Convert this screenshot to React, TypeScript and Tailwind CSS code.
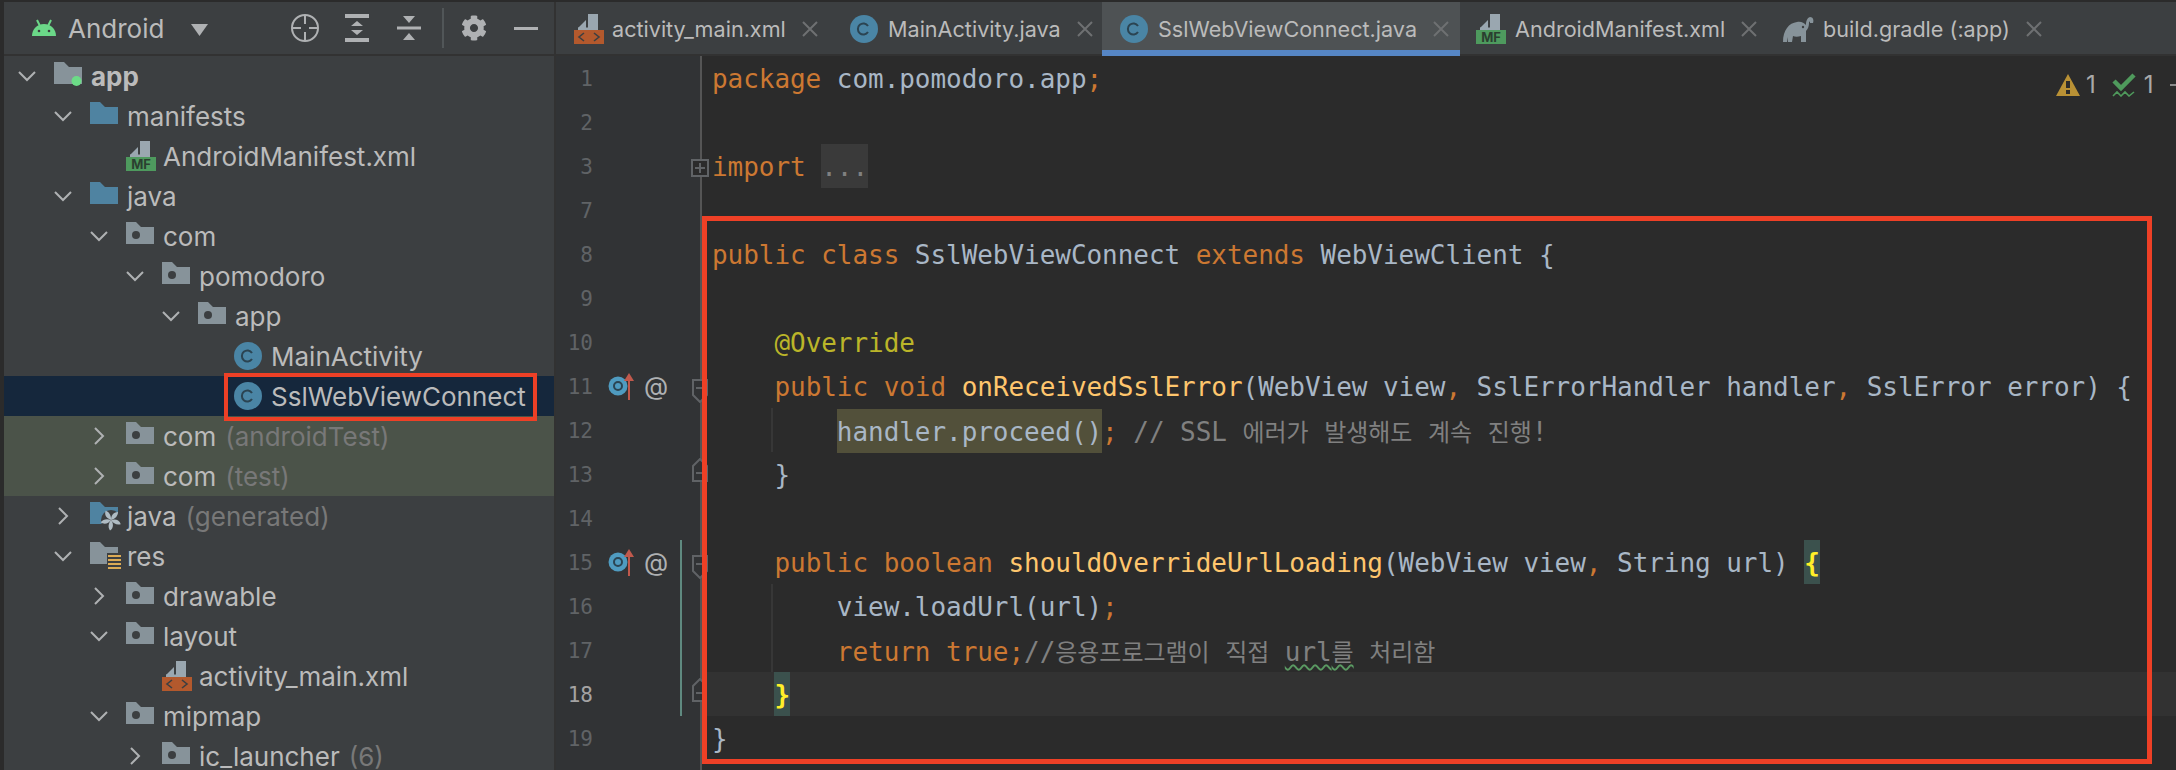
import type { ReactNode } from 'react';
import { FaCog } from 'react-icons/fa';

/* ---------- small icons ---------- */

const FOLDER = 'M0 0H10L15 5H28V22H0Z';

function Chevron({ dir }: { dir: 'down' | 'right' }) {
  return (
    <svg width="18" height="18" viewBox="0 0 18 18" fill="none" stroke="#afb1b3" strokeWidth="2">
      {dir === 'down' ? <path d="M1 5L9 13L17 5" /> : <path d="M5 1L13 9L5 17" />}
    </svg>
  );
}

function Folder({ kind }: { kind: 'source' | 'package' | 'module' | 'generated' | 'res' }) {
  const fill = kind === 'source' || kind === 'generated' ? '#4f83a1' : '#87939a';
  return (
    <svg width="32" height="28" viewBox="0 0 32 28" className="overflow-visible">
      <path d={FOLDER} fill={fill} />
      {kind === 'package' && <circle cx="10" cy="13" r="4" fill="#3c3f41" />}
      {kind === 'module' && <circle cx="22.5" cy="19" r="5" fill="#6cdc87" />}
      {kind === 'generated' && (
        <g>
          <circle cx="21" cy="18" r="10" fill="#3c3f41" />
          <g fill="#afbcc4">
            {[0, 72, 144, 216, 288].map((deg) => (
              <path key={deg} d="M0 0C0 -4 2 -8 7 -8C7 -4 4 -1 0 0Z" transform={`translate(21 18) rotate(${deg})`} />
            ))}
          </g>
        </g>
      )}
      {kind === 'res' && (
        <g>
          <rect x="17" y="11" width="17" height="17" fill="#3c3f41" />
          <g fill="#dcab55">
            <rect x="18" y="13" width="13" height="2" />
            <rect x="18" y="17" width="13" height="2" />
            <rect x="18" y="21" width="13" height="2" />
            <rect x="18" y="25" width="13" height="2" />
          </g>
        </g>
      )}
    </svg>
  );
}

function ClassIcon() {
  return (
    <svg width="28" height="28" viewBox="0 0 28 28">
      <circle cx="14" cy="14" r="14" fill="#4a85a5" />
      <path d="M18 11a5.5 5.5 0 1 0 0 6" fill="none" stroke="#2b4452" strokeWidth="2" />
    </svg>
  );
}

function FileIcon({ badge }: { badge: 'mf' | 'xml' }) {
  return (
    <svg width="30" height="30" viewBox="0 0 30 30">
      <path d="M4 14L12 6V14ZM14 0H24V15H4V16H24V15H14Z" fill="#9aa7b0" />
      <path d="M14 0H24V15H4V13.5H14Z" fill="#9aa7b0" />
      {badge === 'mf' ? (
        <g>
          <rect y="16" width="30" height="14" fill="#4e9a5e" />
          <text x="15" y="28" textAnchor="middle" fontSize="13" fontWeight="700" fill="#2b3f30" fontFamily="Inter, sans-serif">
            MF
          </text>
        </g>
      ) : (
        <g>
          <rect y="16" width="30" height="14" fill="#b3592d" />
          <path d="M10 19L5 23L10 27M20 19L25 23L20 27" fill="none" stroke="#3c3f41" strokeWidth="1.6" />
        </g>
      )}
    </svg>
  );
}

function GradleIcon() {
  return (
    <svg width="32" height="28" viewBox="0 0 32 28">
      <path
        d="M1 27C1 15 7 8 15 7C19 6 22 8 24 10C24 6 25 3 28 2C31 2 32 5 31 8L28 8C28 6 27 6 27 8C27 11 26 14 24 16L24 27H19L19 21C16 22 13 22 11 21L10 27H6L6 22L5 27Z"
        fill="#87939a"
      />
      <circle cx="21" cy="12" r="1.2" fill="#3c3f41" />
    </svg>
  );
}

function CloseX() {
  return (
    <svg width="16" height="16" viewBox="0 0 16 16" stroke="#6e7072" strokeWidth="2" className="ml-4 shrink-0">
      <path d="M1 1L15 15M15 1L1 15" />
    </svg>
  );
}

function FoldMarker({ type }: { type: 'open' | 'close' | 'plus' }) {
  if (type === 'plus') {
    return (
      <svg width="18" height="18" viewBox="0 0 18 18" fill="#2b2b2b" stroke="#606366" strokeWidth="2" className="absolute left-[135px] top-[15px]">
        <rect x="1" y="1" width="16" height="16" />
        <path d="M4 9H14M9 4V14" />
      </svg>
    );
  }
  const open = type === 'open';
  return (
    <svg
      width="16"
      height="24"
      viewBox="0 0 16 24"
      fill="#313335"
      stroke="#606366"
      strokeWidth="2"
      className={open ? 'absolute left-[136px] top-[15px]' : 'absolute left-[136px] top-[6px]'}
    >
      {open ? <path d="M1 1H15V16L8 23L1 16Z" /> : <path d="M1 23H15V8L8 1L1 8Z" />}
      <path d={open ? 'M4 9H12' : 'M4 15H12'} />
    </svg>
  );
}

function OverrideMark() {
  return (
    <div className="absolute left-[52px] top-0 flex h-[44px] items-center">
      <svg width="30" height="28" viewBox="0 0 30 28">
        <circle cx="10" cy="14" r="9.5" fill="#4f9bc0" />
        <circle cx="10" cy="14" r="4" fill="none" stroke="#2b4452" strokeWidth="2" />
        <path d="M21 28V7" stroke="#c0594c" strokeWidth="2" />
        <path d="M16 9L21 1L26 9Z" fill="#c0594c" />
      </svg>
      <span className="ml-[6px] font-['Inter',sans-serif] text-[25px] leading-none text-[#afb1b3]">@</span>
    </div>
  );
}

/* ---------- project tree ---------- */

interface TreeRow {
  depth: number;
  chevron?: 'down' | 'right';
  icon: ReactNode;
  label: string;
  note?: string;
  bold?: boolean;
  bg?: string;
}

const GREEN_ROW = 'bg-[#4b5349]';

const TREE: TreeRow[] = [
  { depth: 0, chevron: 'down', icon: <Folder kind="module" />, label: 'app', bold: true },
  { depth: 1, chevron: 'down', icon: <Folder kind="source" />, label: 'manifests' },
  { depth: 2, icon: <FileIcon badge="mf" />, label: 'AndroidManifest.xml' },
  { depth: 1, chevron: 'down', icon: <Folder kind="source" />, label: 'java' },
  { depth: 2, chevron: 'down', icon: <Folder kind="package" />, label: 'com' },
  { depth: 3, chevron: 'down', icon: <Folder kind="package" />, label: 'pomodoro' },
  { depth: 4, chevron: 'down', icon: <Folder kind="package" />, label: 'app' },
  { depth: 5, icon: <ClassIcon />, label: 'MainActivity' },
  { depth: 5, icon: <ClassIcon />, label: 'SslWebViewConnect', bg: 'bg-[#15273c]' },
  { depth: 2, chevron: 'right', icon: <Folder kind="package" />, label: 'com', note: '(androidTest)', bg: GREEN_ROW },
  { depth: 2, chevron: 'right', icon: <Folder kind="package" />, label: 'com', note: '(test)', bg: GREEN_ROW },
  { depth: 1, chevron: 'right', icon: <Folder kind="generated" />, label: 'java', note: '(generated)' },
  { depth: 1, chevron: 'down', icon: <Folder kind="res" />, label: 'res' },
  { depth: 2, chevron: 'right', icon: <Folder kind="package" />, label: 'drawable' },
  { depth: 2, chevron: 'down', icon: <Folder kind="package" />, label: 'layout' },
  { depth: 3, icon: <FileIcon badge="xml" />, label: 'activity_main.xml' },
  { depth: 2, chevron: 'down', icon: <Folder kind="package" />, label: 'mipmap' },
  { depth: 3, chevron: 'right', icon: <Folder kind="package" />, label: 'ic_launcher', note: '(6)' },
];

function Sidebar() {
  return (
    <div className="relative w-[550px] shrink-0 bg-[#3c3f41]">
      <div className="flex h-[54px] items-center border-b-2 border-[#323232] text-[26px] text-[#bbbbbb]">
        <svg width="24" height="18" viewBox="0 0 24 18" className="ml-[28px]">
          <path d="M0 17C0 10 5 5 12 5C19 5 24 10 24 17Z" fill="#6bd888" />
          <path d="M5 1L8 7M19 1L16 7" stroke="#6bd888" strokeWidth="2" />
          <circle cx="7" cy="12" r="1.3" fill="#3c3f41" />
          <circle cx="17" cy="12" r="1.3" fill="#3c3f41" />
        </svg>
        <span className="ml-3 w-[96px]">Android</span>
        <svg width="17" height="12" viewBox="0 0 17 12" className="ml-[27px] mt-1" fill="#afb1b3">
          <path d="M0 0H17L8.5 12Z" />
        </svg>
        <svg width="28" height="28" viewBox="0 0 28 28" fill="none" stroke="#afb1b3" strokeWidth="2" className="ml-[83px]">
          <circle cx="14" cy="14" r="13" />
          <path d="M14 1V10M14 18V27M1 14H10M18 14H27" />
        </svg>
        <svg width="24" height="28" viewBox="0 0 24 28" fill="#afb1b3" className="ml-[26px]">
          <rect width="24" height="4" />
          <rect y="24" width="24" height="4" />
          <path d="M6 12L12 7L18 12ZM6 16L12 21L18 16Z" />
        </svg>
        <svg width="24" height="28" viewBox="0 0 24 28" fill="#afb1b3" className="ml-[28px]">
          <rect y="12.5" width="24" height="3" />
          <path d="M6 2H18L12 9ZM6 26H18L12 19Z" />
        </svg>
        <div className="ml-[21px] h-[40px] w-[2px] bg-[#515658]" />
        <FaCog className="ml-[17px] text-[26px] text-[#afb1b3]" />
        <div className="ml-[27px] h-[3px] w-[24px] bg-[#afb1b3]" />
      </div>

      {TREE.map((row, i) => (
        <div key={i} className={`flex h-[40px] items-center text-[26px] text-[#bbbbbb] ${row.bg ?? ''}`}>
          <div style={{ width: 14 + row.depth * 36 }} className="shrink-0" />
          <div className="flex w-[36px] shrink-0 items-center">{row.chevron && <Chevron dir={row.chevron} />}</div>
          <div className="flex w-[37px] shrink-0 items-center">{row.icon}</div>
          <span className={row.bold ? 'font-bold' : ''}>{row.label}</span>
          {row.note && <span className="ml-[9px] text-[#787878]">{row.note}</span>}
        </div>
      ))}

      {/* annotation round the selected class */}
      <div className="absolute left-[220px] top-[371px] h-[48px] w-[313px] border-[4px] border-[#ee4026]" />
    </div>
  );
}

/* ---------- tabs ---------- */

const TABS = [
  { w: 'w-[276px]', pad: 'pl-[18px]', slot: 'w-[38px]', icon: <FileIcon badge="xml" />, label: 'activity_main.xml' },
  { w: 'w-[270px]', pad: 'pl-[18px]', slot: 'w-[38px]', icon: <ClassIcon />, label: 'MainActivity.java' },
  { w: 'w-[358px]', pad: 'pl-[18px]', slot: 'w-[38px]', icon: <ClassIcon />, label: 'SslWebViewConnect.java', active: true },
  { w: 'w-[304px]', pad: 'pl-[16px]', slot: 'w-[39px]', icon: <FileIcon badge="mf" />, label: 'AndroidManifest.xml' },
  { w: 'w-[300px]', pad: 'pl-[18px]', slot: 'w-[41px]', icon: <GradleIcon />, label: 'build.gradle (:app)' },
];

function TabBar() {
  return (
    <div className="flex h-[54px] shrink-0 border-b-2 border-[#323232] bg-[#3c3f41] text-[21.6px] text-[#bbbbbb]">
      {TABS.map((t) => (
        <div
          key={t.label}
          className={`flex h-[54px] shrink-0 items-center whitespace-nowrap ${t.w} ${t.pad} ${
            t.active ? 'border-b-[6px] border-[#5686c5] bg-[#4e5254] pt-[6px]' : ''
          }`}
        >
          <div className={`flex shrink-0 items-center ${t.slot}`}>{t.icon}</div>
          <span>{t.label}</span>
          <CloseX />
        </div>
      ))}
    </div>
  );
}

/* ---------- code ---------- */

const Kw = ({ children }: { children: ReactNode }) => <span className="text-[#cc7832]">{children}</span>;
const Fn = ({ children }: { children: ReactNode }) => <span className="text-[#ffc66d]">{children}</span>;
const Cm = ({ children }: { children: ReactNode }) => <span className="text-[#808080]">{children}</span>;
const Ko = ({ children }: { children: ReactNode }) => (
  <span className="font-['Noto_Sans_CJK_KR',sans-serif] text-[24px] text-[#808080]">{children}</span>
);

// text sits 1px below the row centre, the coloured box has to stay on the row
const Hl = ({ bg, children }: { bg: string; children: ReactNode }) => (
  <span className={`relative -top-px inline-block h-[44px] ${bg}`}>
    <span className="relative top-px">{children}</span>
  </span>
);
const Brace = ({ children }: { children: ReactNode }) => (
  <Hl bg="bg-[#3b514d]">
    <span className="font-bold text-[#ffef28]">{children}</span>
  </Hl>
);

interface Line {
  no: number;
  code?: ReactNode;
  fold?: 'open' | 'close' | 'plus';
  mark?: boolean;
  changed?: boolean;
  guide?: boolean;
  current?: boolean;
}

const LINES: Line[] = [
  { no: 1, code: <><Kw>package</Kw> com.pomodoro.app<Kw>;</Kw></> },
  { no: 2 },
  {
    no: 3,
    fold: 'plus',
    code: <><Kw>import</Kw> <Hl bg="bg-[#3a3a3a]"><span className="text-[#808080]">...</span></Hl></>,
  },
  { no: 7 },
  { no: 8, code: <><Kw>public class</Kw> SslWebViewConnect <Kw>extends</Kw> WebViewClient {'{'}</> },
  { no: 9 },
  { no: 10, code: <>{'    '}<span className="text-[#bbb529]">@Override</span></> },
  {
    no: 11,
    mark: true,
    fold: 'open',
    code: (
      <>
        {'    '}<Kw>public void</Kw> <Fn>onReceivedSslError</Fn>(WebView view<Kw>,</Kw> SslErrorHandler handler<Kw>,</Kw> SslError error) {'{'}
      </>
    ),
  },
  {
    no: 12,
    guide: true,
    code: (
      <>
        {'        '}<Hl bg="bg-[#52503a]">handler.proceed()</Hl><Kw>;</Kw>{' '}
        <Cm>// SSL </Cm><Ko>에러가</Ko><Cm> </Cm><Ko>발생해도</Ko><Cm> </Cm><Ko>계속</Ko><Cm> </Cm><Ko>진행</Ko><Cm>!</Cm>
      </>
    ),
  },
  { no: 13, fold: 'close', code: <>{'    }'}</> },
  { no: 14 },
  {
    no: 15,
    mark: true,
    fold: 'open',
    changed: true,
    code: (
      <>
        {'    '}<Kw>public boolean</Kw> <Fn>shouldOverrideUrlLoading</Fn>(WebView view<Kw>,</Kw> String url) <Brace>{'{'}</Brace>
      </>
    ),
  },
  { no: 16, changed: true, guide: true, code: <>{'        '}view.loadUrl(url)<Kw>;</Kw></> },
  {
    no: 17,
    changed: true,
    guide: true,
    code: (
      <>
        {'        '}<Kw>return true;</Kw><Cm>//</Cm><Ko>응용프로그램이</Ko><Cm> </Cm><Ko>직접</Ko><Cm> </Cm>
        <span className="underline decoration-[#5a9a62] decoration-wavy decoration-2 underline-offset-[3px]">
          <Cm>url</Cm><Ko>를</Ko>
        </span>
        <Cm> </Cm><Ko>처리함</Ko>
      </>
    ),
  },
  { no: 18, changed: true, current: true, fold: 'close', code: <>{'    '}<Brace>{'}'}</Brace></> },
  { no: 19, code: <>{'}'}</> },
];

function CodeRow({ line }: { line: Line }) {
  return (
    <div className="flex h-[44px] shrink-0">
      <div className="relative w-[146px] shrink-0 border-r-2 border-[#555555] bg-[#313335]">
        <div
          className={`relative top-px w-[37px] text-right text-[21px] leading-[44px] ${line.current ? 'text-[#a4a3a3]' : 'text-[#606366]'}`}
        >
          {line.no}
        </div>
        {line.mark && <OverrideMark />}
        {line.changed && <div className="absolute left-[124px] top-0 h-full w-[2px] bg-[#5f8a80]" />}
        {line.fold && <FoldMarker type={line.fold} />}
      </div>
      <div
        className={`relative flex-1 whitespace-pre pl-[10px] text-[26px] leading-[44px] tracking-[-0.05px] text-[#a9b7c6] ${
          line.current ? 'bg-[#323232]' : ''
        }`}
      >
        {line.guide && <div className="absolute left-[69px] top-0 h-full w-[2px] bg-[#373737]" />}
        <span className="relative top-px">{line.code}</span>
      </div>
    </div>
  );
}

function Editor() {
  return (
    <div className="relative flex min-w-0 flex-1 flex-col bg-[#2b2b2b]">
      <TabBar />
      <div className="flex flex-1 flex-col font-['DejaVu_Sans_Mono',monospace]">
        {LINES.map((line) => (
          <CodeRow key={line.no} line={line} />
        ))}
        <div className="flex-1">
          <div className="h-full w-[146px] border-r-2 border-[#555555] bg-[#313335]" />
        </div>
      </div>

      {/* inspection widget, sits over the editor */}
      <div className="absolute left-[1500px] top-[68px] flex h-[30px] items-center text-[24px] text-[#a9a9a9]">
        <svg width="24" height="22" viewBox="0 0 24 22">
          <path d="M12 0L24 22H0Z" fill="#b99135" />
          <rect x="10" y="7" width="4" height="7" fill="#2b2b2b" />
          <rect x="10" y="16" width="4" height="4" fill="#2b2b2b" />
        </svg>
        <span className="ml-[6px]">1</span>
        <svg width="24" height="24" viewBox="0 0 24 24" fill="none" className="ml-[16px]">
          <path d="M2 8L9 15L22 2" stroke="#4f9a5c" strokeWidth="4.5" />
          <path d="M1 23L5 19L9 23L13 19L17 23L22 19" stroke="#4f9a5c" strokeWidth="1.6" />
        </svg>
        <span className="ml-[8px]">1</span>
        <div className="ml-[16px] h-[2px] w-[6px] bg-[#8a8a8a]" />
      </div>

      {/* annotation round the class body */}
      <div className="absolute left-[146px] top-[214px] h-[548px] w-[1450px] border-[5px] border-[#ee4026]" />
    </div>
  );
}

export default function App() {
  return (
    <div className="flex h-[770px] w-[2176px] overflow-hidden bg-[#2b2b2b] pl-[4px] pt-[2px] font-['Inter',sans-serif]">
      <Sidebar />
      <div className="w-[2px] shrink-0 bg-[#323232]" />
      <Editor />
    </div>
  );
}
